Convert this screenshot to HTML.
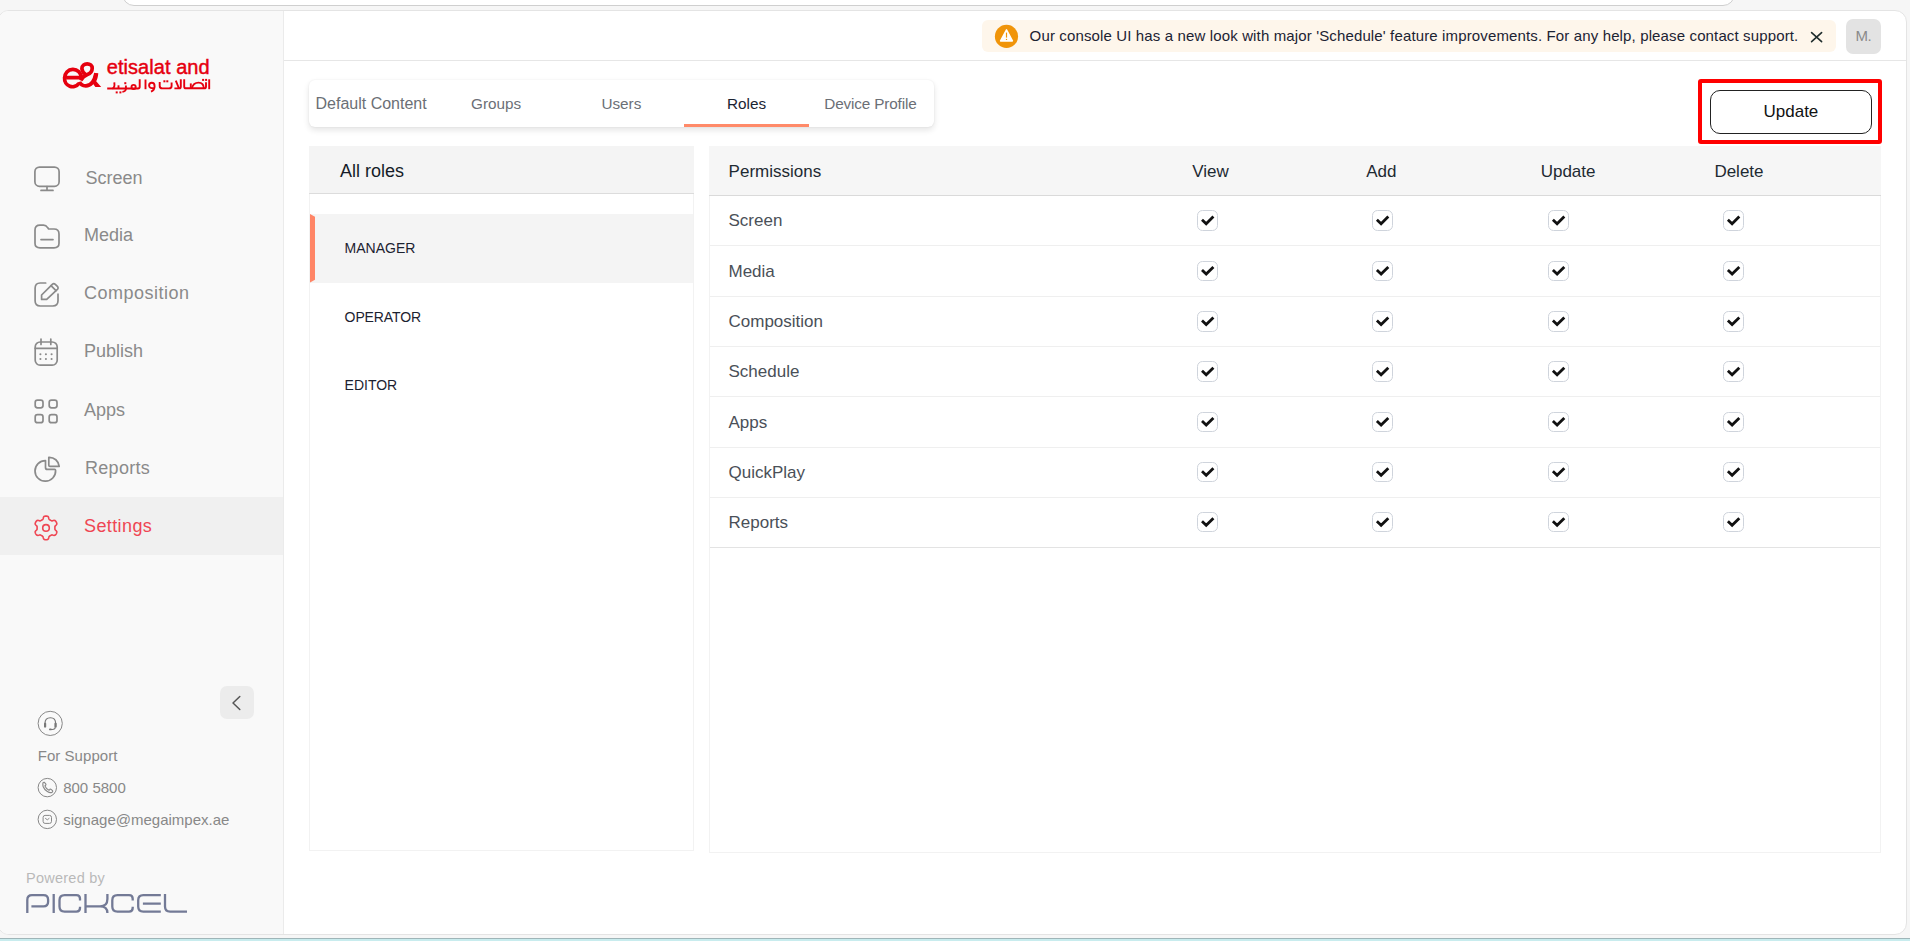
<!DOCTYPE html><html><head><meta charset="utf-8"><title>Roles</title><style>
*{margin:0;padding:0;box-sizing:border-box}
html,body{width:1910px;height:941px;overflow:hidden}
body{position:relative;background:#f6f6f6;font-family:"Liberation Sans",sans-serif}
.t{position:absolute;line-height:1;white-space:pre}
.a{position:absolute}
</style></head><body>
<div class="a" style="left:122px;top:-20px;width:1613px;height:26px;background:#fff;border:1px solid #cfcfcf;border-radius:0 0 12px 12px"></div>
<div class="a" style="left:-3px;top:10px;width:1910px;height:925px;background:#fff;border:1px solid #e4e4e4;border-radius:12px;overflow:hidden">
<div class="a" style="left:2px;top:0;width:284px;height:923px;background:#f9f9f9;border-right:1px solid #ebebeb"></div>
</div>
<div class="a" style="left:0;top:938px;width:1910px;height:1px;background:#9fb5b8"></div>
<div class="a" style="left:0;top:939px;width:1910px;height:2px;background:#c8ecee"></div>
<div class="a" style="left:284px;top:60px;width:1622px;height:1px;background:#e6e6e6"></div>
<div class="a" style="left:0;top:497px;width:283px;height:58px;background:#f0f0f0"></div>
<svg class="a" style="left:0;top:0" width="284" height="120" viewBox="0 0 284 120">
<g fill="none" stroke="#e6000f" stroke-width="3.7" stroke-linecap="butt" stroke-linejoin="round">
<path d="M66.5,77.6 L81.3,77.6 A7.9,8 0 1 0 64.6,78 A7.9,8 0 0 0 79,83.2"/>
<path d="M79.6,81.8 C80.5,84.6 82.8,85.9 85.8,85.9 C91.2,85.9 94.5,80.5 96,73.2"/>
<path d="M80.8,80.5 C82.5,77 84.5,75.7 87.4,74.6 C90.8,73.3 92.2,71 92.2,68.3 C92.2,65.4 90,63.8 87.2,63.8 C84.2,63.8 81.9,65.6 81.9,68.5 C81.9,70.5 83,72.3 85.2,74.2"/>
</g>
<path d="M94.2,73.2 L98.3,73.2 C98,77 97.2,79.5 96.2,81.3 L101.2,86.9 L95.4,86.9 L93,83.8 Z" fill="#e6000f"/>
</svg>
<div class="t" style="left:106.8px;top:57px;font-size:20px;color:#e6000f;font-weight:400;letter-spacing:0.05px;-webkit-text-stroke:0.45px #e6000f">etisalat and</div>
<svg class="a" style="left:0;top:0" width="284" height="120" viewBox="0 0 284 120">
<g fill="none" stroke="#e6000f" stroke-width="1.9" stroke-linecap="butt" stroke-linejoin="round">
<path d="M209.2,79.3 L209.2,89.2"/>
<path d="M206,82.2 L206,86.4 Q206,88.3 204.2,88.3 L186,88.3 Q184.2,88.3 184.2,86.4 L184.2,79.3"/>
<path d="M203.8,88.3 C203.8,84.2 201.5,82.6 198.5,82.6 C195.2,82.6 192.8,84.6 191.8,88.3"/>
<path d="M190.8,83.4 L190.8,88"/>
<path d="M180.8,79.3 L180.8,86.8 Q180.8,88.4 179.2,88.4 L174.4,88.4 M175.8,80.6 L178.8,88"/>
<path d="M159.7,82 L159.7,86 Q159.7,88.4 162.4,88.4 L169,88.4 Q171.6,88.4 171.6,86 L171.6,82.5"/>
<path d="M151,91.6 C153.6,90.6 154.6,88.6 154.6,86.2 C154.6,84 153.4,82.8 151.8,82.8 C150.1,82.8 149.1,84 149.1,85.6 C149.1,87.6 150.6,88.4 154.4,88.3"/>
<path d="M145.5,79.5 L145.5,89.2"/>
<path d="M139.7,79.2 L139.7,86.8 Q139.7,88.5 138,88.5 L107.2,88.5"/>
<circle cx="133.6" cy="87" r="2.1"/>
<path d="M125.9,85.6 L125.9,89 Q125.6,91.6 122.4,91.9"/>
<path d="M118.5,85.3 L118.5,88.4"/>
<path d="M114.3,82.4 C114.8,86 114.4,88 112.5,88.5"/>
</g>
<g fill="#e6000f">
<rect x="202.1" y="78.9" width="2" height="2"/><rect x="205.1" y="78.9" width="2" height="2"/>
<rect x="163.4" y="80.3" width="2" height="2"/><rect x="166.3" y="80.3" width="2" height="2"/>
<rect x="124.3" y="82.2" width="2" height="2"/>
<rect x="115.7" y="91.4" width="2" height="2"/><rect x="119.4" y="91.4" width="2" height="2"/>
</g></svg>
<div class="t" style="left:85.5px;top:169px;font-size:18px;color:#8a8a8a;font-weight:400;">Screen</div>
<div class="t" style="left:84px;top:226px;font-size:18px;color:#8a8a8a;font-weight:400;">Media</div>
<div class="t" style="left:84px;top:284px;font-size:18px;color:#8a8a8a;font-weight:400;letter-spacing:0.5px">Composition</div>
<div class="t" style="left:84px;top:342px;font-size:18px;color:#8a8a8a;font-weight:400;">Publish</div>
<div class="t" style="left:84px;top:401px;font-size:18px;color:#8a8a8a;font-weight:400;">Apps</div>
<div class="t" style="left:85px;top:459px;font-size:18px;color:#8a8a8a;font-weight:400;letter-spacing:0.3px">Reports</div>
<div class="t" style="left:84px;top:517px;font-size:18px;color:#ef4653;font-weight:400;letter-spacing:0.4px">Settings</div>
<svg class="a" style="left:0;top:150px" width="284" height="400" viewBox="0 150 284 400">
<g fill="none" stroke="#8a8a8a" stroke-width="1.7" stroke-linecap="round" stroke-linejoin="round">
<rect x="34.9" y="167.1" width="24.2" height="19.2" rx="4.6"/>
<path d="M47,186.5 L47,190.2 M41,190.4 L53,190.4"/>
<path d="M35,230 C35,226.5 36.6,225.2 40,225.2 L43.5,225.2 C45.6,225.2 46.6,226 47.6,227.6 L48.6,229 L54,229 C57.6,229 59,230.6 59,234 L59,243.2 C59,246.6 57.6,247.8 54,247.8 L40,247.8 C36.6,247.8 35,246.6 35,243.2 Z"/>
<path d="M41,239.6 L53,239.6"/>
<path d="M45.7,283 L40.2,283 C36.6,283 35.1,284.6 35.1,288.2 L35.1,300.8 C35.1,304.4 36.6,306 40.2,306 L52.8,306 C56.4,306 58,304.4 58,300.8 L58,294.2"/>
<path d="M41.6,299.4 L41.6,295 L52.3,284.3 C53.2,283.4 54.4,283.4 55.3,284.3 L57.4,286.4 C58.3,287.3 58.3,288.5 57.4,289.4 L46.7,299.4 Z"/>
<path d="M51,285.6 L56,290.6"/>
<rect x="35.2" y="342" width="22" height="23.2" rx="5"/>
<path d="M35.2,348.3 L57.2,348.3 M41,339 L41,344.5 M50.8,339 L50.8,344.5"/>
<rect x="35.2" y="400.2" width="7.8" height="7.6" rx="2.3"/>
<rect x="49.2" y="400.2" width="7.8" height="7.6" rx="2.3"/>
<rect x="35.2" y="414.6" width="7.8" height="8.1" rx="2.3"/>
<rect x="49.2" y="414.6" width="7.8" height="8.1" rx="2.3"/>
<path d="M45.5,460.6 A10.3,10.3 0 1 0 55.6,470.5 C55.6,469.9 55.2,469.4 54.6,469.4 L47.5,469.4 C46.4,469.4 45.5,468.5 45.5,467.4 Z"/>
<path d="M48.8,457.3 A10,10 0 0 1 59.2,466.4 L50,466.4 C49.3,466.4 48.8,465.9 48.8,465.2 Z"/>
</g>
<g fill="#8a8a8a">
<circle cx="40.4" cy="354.2" r="1.05"/><circle cx="45.9" cy="354.2" r="1.05"/><circle cx="51.6" cy="354.2" r="1.05"/>
<circle cx="40.4" cy="359" r="1.05"/><circle cx="45.9" cy="359" r="1.05"/><circle cx="51.6" cy="359" r="1.05"/>
</g>
<g fill="none" stroke="#ef4653" stroke-width="1.6" stroke-linejoin="round">
<path d="M46.00,516.10 L46.51,516.12 L47.03,516.17 L47.53,516.29 L48.00,516.54 L48.41,517.05 L48.68,517.90 L48.88,518.76 L49.13,519.29 L49.44,519.59 L49.77,519.81 L50.11,520.00 L50.45,520.19 L50.79,520.39 L51.12,520.59 L51.47,520.77 L51.89,520.88 L52.48,520.83 L53.32,520.58 L54.19,520.39 L54.84,520.48 L55.29,520.77 L55.64,521.15 L55.95,521.56 L56.22,522.00 L56.46,522.45 L56.67,522.93 L56.82,523.42 L56.84,523.95 L56.60,524.56 L56.00,525.22 L55.36,525.83 L55.02,526.31 L54.91,526.73 L54.89,527.12 L54.90,527.51 L54.90,527.90 L54.90,528.29 L54.89,528.68 L54.91,529.07 L55.02,529.49 L55.36,529.97 L56.00,530.58 L56.60,531.24 L56.84,531.85 L56.82,532.38 L56.67,532.87 L56.46,533.35 L56.22,533.80 L55.95,534.24 L55.64,534.65 L55.29,535.03 L54.84,535.32 L54.19,535.41 L53.32,535.22 L52.48,534.97 L51.89,534.92 L51.47,535.03 L51.12,535.21 L50.79,535.41 L50.45,535.61 L50.11,535.80 L49.77,535.99 L49.44,536.21 L49.13,536.51 L48.88,537.04 L48.68,537.90 L48.41,538.75 L48.00,539.26 L47.53,539.51 L47.03,539.63 L46.51,539.68 L46.00,539.70 L45.49,539.68 L44.97,539.63 L44.47,539.51 L44.00,539.26 L43.59,538.75 L43.32,537.90 L43.12,537.04 L42.87,536.51 L42.56,536.21 L42.23,535.99 L41.89,535.80 L41.55,535.61 L41.21,535.41 L40.88,535.21 L40.53,535.03 L40.11,534.92 L39.52,534.97 L38.68,535.22 L37.81,535.41 L37.16,535.32 L36.71,535.03 L36.36,534.65 L36.05,534.24 L35.78,533.80 L35.54,533.35 L35.33,532.87 L35.18,532.38 L35.16,531.85 L35.40,531.24 L36.00,530.58 L36.64,529.97 L36.98,529.49 L37.09,529.07 L37.11,528.68 L37.10,528.29 L37.10,527.90 L37.10,527.51 L37.11,527.12 L37.09,526.73 L36.98,526.31 L36.64,525.83 L36.00,525.22 L35.40,524.56 L35.16,523.95 L35.18,523.42 L35.33,522.93 L35.54,522.45 L35.78,522.00 L36.05,521.56 L36.36,521.15 L36.71,520.77 L37.16,520.48 L37.81,520.39 L38.68,520.58 L39.52,520.83 L40.11,520.88 L40.53,520.77 L40.88,520.59 L41.21,520.39 L41.55,520.19 L41.89,520.00 L42.23,519.81 L42.56,519.59 L42.87,519.29 L43.12,518.76 L43.32,517.90 L43.59,517.05 L44.00,516.54 L44.47,516.29 L44.97,516.17 L45.49,516.12Z"/>
<circle cx="46" cy="527.9" r="3.3"/>
</g>
</svg>
<div class="a" style="left:220px;top:686px;width:34px;height:33px;background:#ececec;border-radius:7px"></div>
<svg class="a" style="left:220px;top:686px" width="34" height="33" viewBox="0 0 34 33"><path d="M19.8,10.5 L13,17 L19.8,23.5" fill="none" stroke="#555" stroke-width="1.5" stroke-linecap="round" stroke-linejoin="round"/></svg>
<svg class="a" style="left:0;top:700px" width="284" height="140" viewBox="0 700 284 140">
<g fill="none" stroke="#888" stroke-width="1">
<circle cx="50.2" cy="723.4" r="12.1"/>
<circle cx="47.3" cy="787.6" r="9.2"/>
<circle cx="47.3" cy="819.4" r="9.2"/>
</g>
<g fill="none" stroke="#777" stroke-width="1.15" stroke-linecap="round">
<path d="M45,726 L45,723.2 C45,719.6 47.4,717.7 50.5,717.7 C53.6,717.7 55.6,719.6 55.6,723.2 L55.6,726"/>
<path d="M55.2,727.6 C55.2,729 54.2,729.5 52.4,729.5 L49.8,729.5"/>
</g>
<g fill="#777"><rect x="44" y="722.8" width="2.2" height="4.8" rx="0.9"/><rect x="54.4" y="722.8" width="2.3" height="4.8" rx="0.9"/><rect x="49.2" y="728.6" width="2.4" height="1.7" rx="0.5"/></g>
<g transform="translate(47.7,787.4) scale(1.17) translate(-47.6,-786.8)"><path d="M43.5,783.3 C43.5,782.6 44.2,782.2 44.8,782.5 L45.9,783.8 C46.2,784.2 46.1,784.8 45.7,785.1 L45.2,785.5 C45.8,787.1 47,788.4 48.7,789.2 L49.2,788.7 C49.5,788.3 50.1,788.2 50.5,788.5 L51.7,789.6 C52.1,790.1 51.8,790.8 51.1,791.1 C50.2,791.5 48.9,791.3 47.3,790.3 C45.6,789.2 44.3,787.7 43.7,786 C43.4,785 43.4,784 43.5,783.3 Z" fill="none" stroke="#888" stroke-width="1"/></g>
<g fill="none" stroke="#888" stroke-width="1"><rect x="43.1" y="815.4" width="8.4" height="8" rx="2"/><path d="M45.2,818.2 L47.3,819.8 L49.4,818.2"/></g>
</svg>
<div class="t" style="left:37.7px;top:748px;font-size:15px;color:#888;font-weight:400;letter-spacing:0.05px">For Support</div>
<div class="t" style="left:63.2px;top:780px;font-size:15px;color:#888;font-weight:400;">800 5800</div>
<div class="t" style="left:63.2px;top:812px;font-size:15px;color:#888;font-weight:400;">signage@megaimpex.ae</div>
<div class="t" style="left:26px;top:871px;font-size:14.5px;color:#b9b9b9;font-weight:400;letter-spacing:0.25px">Powered by</div>
<svg class="a" style="left:0;top:880px" width="284" height="40" viewBox="0 880 284 40">
<g fill="none" stroke="#737a96" stroke-width="2.3" stroke-linecap="butt" stroke-linejoin="round">
<path d="M27.3,913 L27.3,900 Q27.3,895.2 32,895.2 L43.5,895.2 Q48.1,895.2 48.1,899.8 L48.1,901.8 Q48.1,906.4 43.5,906.4 L31.4,906.4"/>
<path d="M53.7,894 L53.7,913"/>
<path d="M80,900.4 L80,898.8 Q80,895.2 76.4,895.2 L64.6,895.2 Q59.5,895.2 59.5,900.3 L59.5,906.6 Q59.5,911.7 64.6,911.7 L76.4,911.7 Q80,911.7 80,908.1 L80,906.8"/>
<path d="M85.5,894 L85.5,913 M86.6,906.4 L100,906.4 Q107.4,906.4 107.4,899 L107.4,894 M100,906.4 Q107.4,906.4 107.4,913"/>
<path d="M132.7,900.4 L132.7,898.8 Q132.7,895.2 129.1,895.2 L117.4,895.2 Q112.3,895.2 112.3,900.3 L112.3,906.6 Q112.3,911.7 117.4,911.7 L129.1,911.7 Q132.7,911.7 132.7,908.1 L132.7,906.8"/>
<path d="M160.8,895.2 L143.3,895.2 Q138.2,895.2 138.2,900.3 L138.2,906.6 Q138.2,911.7 143.3,911.7 L160.8,911.7 M142.9,903.6 L160.8,903.6"/>
<path d="M165,894 L165,906.6 Q165,911.7 170.1,911.7 L187,911.7"/>
</g></svg>
<div class="a" style="left:982px;top:20px;width:854px;height:32px;background:#fef6eb;border-radius:6px"></div>
<svg class="a" style="left:990px;top:20px" width="34" height="32" viewBox="990 20 34 32">
<circle cx="1006.5" cy="36.4" r="11.6" fill="#f09409"/>
<path d="M1006.5,29.8 L1012.4,40.9 L1000.6,40.9 Z" fill="#fff" stroke="#fff" stroke-width="1.5" stroke-linejoin="round"/>
<path d="M1006.5,32.6 L1006.5,37.6" stroke="#f09409" stroke-width="1.2"/>
<circle cx="1006.5" cy="39.4" r="0.7" fill="#f09409"/>
</svg>
<div class="t" style="left:1029.6px;top:28px;font-size:15px;color:#1c2333;font-weight:400;letter-spacing:0.137px">Our console UI has a new look with major 'Schedule' feature improvements. For any help, please contact support.</div>
<svg class="a" style="left:1806px;top:27px" width="22" height="20" viewBox="1806 27 22 20"><path d="M1811.6,32.6 L1821.6,41.6 M1821.6,32.6 L1811.6,41.6" stroke="#1f2d2d" stroke-width="1.6" stroke-linecap="round"/></svg>
<div class="a" style="left:1846px;top:19px;width:35px;height:35px;background:#e3e3e3;border-radius:7px"></div>
<div class="t" style="left:1855.6px;top:28px;font-size:15px;color:#8a8a8a;font-weight:400;letter-spacing:-0.6px">M.</div>
<div class="a" style="left:309px;top:80px;width:625px;height:47px;background:#fff;border-radius:6px;box-shadow:0 3px 6px rgba(0,0,0,0.11),0 0 2px rgba(0,0,0,0.07)"></div>
<div class="t" style="left:315.5px;top:96px;font-size:16px;color:#6b6f76;font-weight:400;">Default Content</div>
<div class="t" style="left:471px;top:96px;font-size:15.3px;color:#6b6f76;font-weight:400;">Groups</div>
<div class="t" style="left:601.4px;top:96px;font-size:15.3px;color:#6b6f76;font-weight:400;">Users</div>
<div class="t" style="left:727px;top:96px;font-size:15.3px;color:#1b2433;font-weight:400;">Roles</div>
<div class="t" style="left:824.3px;top:96px;font-size:15.3px;color:#6b6f76;font-weight:400;letter-spacing:-0.15px">Device Profile</div>
<div class="a" style="left:684px;top:124px;width:125px;height:3px;background:#ff8a69"></div>
<div class="a" style="left:1697.5px;top:79.4px;width:184px;height:65px;border:4px solid #ff0000;border-radius:3px"></div>
<div class="a" style="left:1710px;top:90px;width:162px;height:44px;border:1.3px solid #222;border-radius:10px;background:#fff"></div>
<div class="t" style="left:1763.5px;top:103px;font-size:17px;color:#111;font-weight:400;">Update</div>
<div class="a" style="left:309px;top:146px;width:385px;height:705px;border:1px solid #f2f2f2;border-top:0"></div>
<div class="a" style="left:309px;top:146px;width:385px;height:48px;background:#f4f4f4;border-bottom:1px solid #dcdcdc"></div>
<div class="t" style="left:340px;top:162px;font-size:18px;color:#151c28;font-weight:400;">All roles</div>
<div class="a" style="left:310px;top:214px;width:383px;height:68.5px;background:#f4f4f4"></div>
<div class="a" style="left:310px;top:214px;width:5px;height:68.5px;background:#ff8566;clip-path:polygon(0 0,100% 2.8px,100% calc(100% - 2.8px),0 100%)"></div>
<div class="t" style="left:344.6px;top:241px;font-size:14px;color:#1c2230;font-weight:400;">MANAGER</div>
<div class="t" style="left:344.6px;top:310px;font-size:14px;color:#1c2230;font-weight:400;letter-spacing:-0.1px">OPERATOR</div>
<div class="t" style="left:344.6px;top:378px;font-size:14px;color:#1c2230;font-weight:400;">EDITOR</div>
<div class="a" style="left:709px;top:146px;width:1172px;height:707px;border:1px solid #f2f2f2;border-top:0"></div>
<div class="a" style="left:709px;top:146px;width:1172px;height:50px;background:#f6f6f6;border-bottom:1px solid #dadada"></div>
<div class="t" style="left:728.6px;top:163px;font-size:17px;color:#1e2a32;font-weight:400;">Permissions</div>
<div class="t" style="left:1192.3px;top:163px;font-size:17px;color:#1e2a32;font-weight:400;">View</div>
<div class="t" style="left:1366.2px;top:163px;font-size:17px;color:#1e2a32;font-weight:400;">Add</div>
<div class="t" style="left:1540.7px;top:163px;font-size:17px;color:#1e2a32;font-weight:400;">Update</div>
<div class="t" style="left:1714.4px;top:163px;font-size:17px;color:#1e2a32;font-weight:400;">Delete</div>
<div class="t" style="left:728.5px;top:212px;font-size:17px;color:#4a5058;font-weight:400;">Screen</div>
<div class="a" style="left:710px;top:244.9px;width:1170px;height:1px;background:#efefef"></div>
<div class="t" style="left:728.5px;top:263px;font-size:17px;color:#4a5058;font-weight:400;">Media</div>
<div class="a" style="left:710px;top:295.8px;width:1170px;height:1px;background:#efefef"></div>
<div class="t" style="left:728.5px;top:313px;font-size:17px;color:#4a5058;font-weight:400;">Composition</div>
<div class="a" style="left:710px;top:346.0px;width:1170px;height:1px;background:#efefef"></div>
<div class="t" style="left:728.5px;top:363px;font-size:17px;color:#4a5058;font-weight:400;">Schedule</div>
<div class="a" style="left:710px;top:396.2px;width:1170px;height:1px;background:#efefef"></div>
<div class="t" style="left:728.5px;top:414px;font-size:17px;color:#4a5058;font-weight:400;">Apps</div>
<div class="a" style="left:710px;top:446.6px;width:1170px;height:1px;background:#efefef"></div>
<div class="t" style="left:728.5px;top:464px;font-size:17px;color:#4a5058;font-weight:400;">QuickPlay</div>
<div class="a" style="left:710px;top:496.5px;width:1170px;height:1px;background:#efefef"></div>
<div class="t" style="left:728.5px;top:514px;font-size:17px;color:#4a5058;font-weight:400;">Reports</div>
<div class="a" style="left:710px;top:546.7px;width:1170px;height:1px;background:#e3e3e3"></div>
<style>.cb{position:absolute;width:20.4px;height:20.4px;border:1px solid #cfd4dc;border-radius:5.5px;background:#fff}</style>
<div class="cb" style="left:1197.3px;top:210.2px"></div><div class="cb" style="left:1372.2px;top:210.2px"></div><div class="cb" style="left:1548.2px;top:210.2px"></div><div class="cb" style="left:1723.2px;top:210.2px"></div><div class="cb" style="left:1197.3px;top:260.7px"></div><div class="cb" style="left:1372.2px;top:260.7px"></div><div class="cb" style="left:1548.2px;top:260.7px"></div><div class="cb" style="left:1723.2px;top:260.7px"></div><div class="cb" style="left:1197.3px;top:311.2px"></div><div class="cb" style="left:1372.2px;top:311.2px"></div><div class="cb" style="left:1548.2px;top:311.2px"></div><div class="cb" style="left:1723.2px;top:311.2px"></div><div class="cb" style="left:1197.3px;top:361.4px"></div><div class="cb" style="left:1372.2px;top:361.4px"></div><div class="cb" style="left:1548.2px;top:361.4px"></div><div class="cb" style="left:1723.2px;top:361.4px"></div><div class="cb" style="left:1197.3px;top:411.7px"></div><div class="cb" style="left:1372.2px;top:411.7px"></div><div class="cb" style="left:1548.2px;top:411.7px"></div><div class="cb" style="left:1723.2px;top:411.7px"></div><div class="cb" style="left:1197.3px;top:461.9px"></div><div class="cb" style="left:1372.2px;top:461.9px"></div><div class="cb" style="left:1548.2px;top:461.9px"></div><div class="cb" style="left:1723.2px;top:461.9px"></div><div class="cb" style="left:1197.3px;top:511.9px"></div><div class="cb" style="left:1372.2px;top:511.9px"></div><div class="cb" style="left:1548.2px;top:511.9px"></div><div class="cb" style="left:1723.2px;top:511.9px"></div>
<svg class="a" style="left:0;top:0" width="1910" height="600" viewBox="0 0 1910 600"><path d="M1202.0,219.7 L1206.2,223.7 L1213.4,216.6 M1376.9,219.7 L1381.1,223.7 L1388.3,216.6 M1552.9,219.7 L1557.1,223.7 L1564.3,216.6 M1727.9,219.7 L1732.1,223.7 L1739.3,216.6 M1202.0,270.1 L1206.2,274.1 L1213.4,267.0 M1376.9,270.1 L1381.1,274.1 L1388.3,267.0 M1552.9,270.1 L1557.1,274.1 L1564.3,267.0 M1727.9,270.1 L1732.1,274.1 L1739.3,267.0 M1202.0,320.6 L1206.2,324.6 L1213.4,317.5 M1376.9,320.6 L1381.1,324.6 L1388.3,317.5 M1552.9,320.6 L1557.1,324.6 L1564.3,317.5 M1727.9,320.6 L1732.1,324.6 L1739.3,317.5 M1202.0,370.8 L1206.2,374.8 L1213.4,367.7 M1376.9,370.8 L1381.1,374.8 L1388.3,367.7 M1552.9,370.8 L1557.1,374.8 L1564.3,367.7 M1727.9,370.8 L1732.1,374.8 L1739.3,367.7 M1202.0,421.1 L1206.2,425.1 L1213.4,418.0 M1376.9,421.1 L1381.1,425.1 L1388.3,418.0 M1552.9,421.1 L1557.1,425.1 L1564.3,418.0 M1727.9,421.1 L1732.1,425.1 L1739.3,418.0 M1202.0,471.2 L1206.2,475.2 L1213.4,468.2 M1376.9,471.2 L1381.1,475.2 L1388.3,468.2 M1552.9,471.2 L1557.1,475.2 L1564.3,468.2 M1727.9,471.2 L1732.1,475.2 L1739.3,468.2 M1202.0,521.3 L1206.2,525.3 L1213.4,518.2 M1376.9,521.3 L1381.1,525.3 L1388.3,518.2 M1552.9,521.3 L1557.1,525.3 L1564.3,518.2 M1727.9,521.3 L1732.1,525.3 L1739.3,518.2 " fill="none" stroke="#111" stroke-width="2.8" stroke-linecap="butt" stroke-linejoin="miter"/></svg>
</body></html>
